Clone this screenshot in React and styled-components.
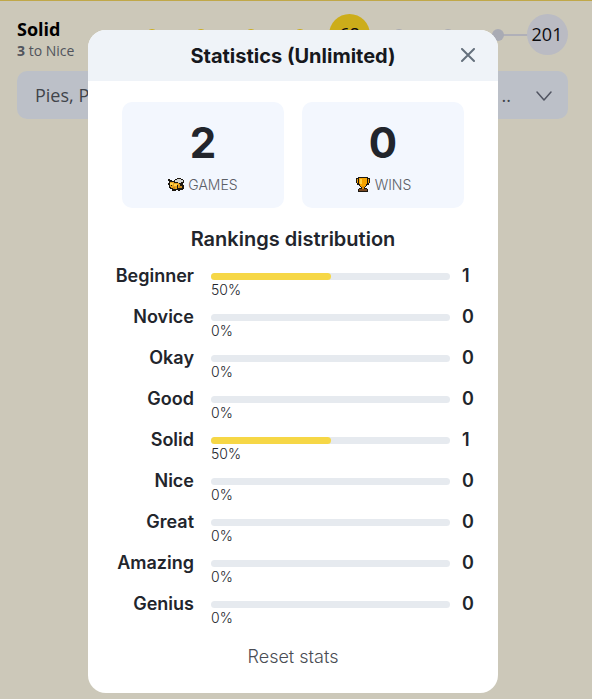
import React from 'react'
import styled, { createGlobalStyle } from 'styled-components'

const GlobalStyle = createGlobalStyle`
  * {
    box-sizing: border-box;
  }
  body {
    margin: 0;
    background-color: #fffbe8;
    color: #22252c;
    font-family: Inter, 'Liberation Sans', sans-serif;
  }
  h1, h2, p, ul, dl, dd {
    margin: 0;
    padding: 0;
  }
  button {
    border: none;
    padding: 0;
    background: none;
    font: inherit;
    cursor: pointer;
  }
`

const Game = styled.main`
  border-top: 1px solid #f0d35c;
  padding: 13px 24px 0 17px;
  font-family: 'Open Sans', sans-serif;
`

const RankRow = styled.div`
  display: flex;
  align-items: flex-start;
  justify-content: space-between;
  height: 41px;
`

const Rank = styled.div`
  padding-top: 3px;
`

const RankName = styled.p`
  color: #000;
  font-size: 18px;
  font-weight: 700;
  line-height: 24px;
`

const NextRank = styled.p`
  color: #666a74;
  font-size: 14px;
  line-height: 20px;
`

const Progress = styled.ul`
  display: flex;
  align-items: center;
  justify-content: space-between;
  width: 407px;
  height: 41px;
  margin-right: 15px;
  list-style: none;
  background: linear-gradient(#dcdde6, #dcdde6) center / 100% 2px no-repeat;
`

const Step = styled.li`
  display: flex;
  justify-content: center;
  width: 12px;
`

const Dot = styled.span`
  width: 12px;
  height: 12px;
  border-radius: 50%;
  background-color: ${props => (props.$reached ? '#ffd921' : '#d4d6e2')};
`

const Score = styled.span`
  flex: none;
  width: 41px;
  border-radius: 50%;
  background-color: ${props => (props.$reached ? '#ffd921' : '#e9eaf4')};
  color: #101014;
  font-size: 18px;
  line-height: 41px;
  text-align: center;
`

const WordList = styled.button`
  display: flex;
  align-items: center;
  width: 100%;
  height: 48px;
  margin-top: 16px;
  padding: 0 15px 0 18px;
  border-radius: 10px;
  background-color: #ecf1fa;
  color: #50555e;
  font-size: 18px;
`

const Words = styled.span`
  flex: 1;
  text-align: left;
`

const Chevron = styled.svg`
  width: 18px;
  height: 18px;
  margin-left: 24px;
`

const Overlay = styled.div`
  position: fixed;
  inset: 0;
  display: flex;
  align-items: flex-start;
  justify-content: center;
  padding: 30px 16px 0 10px;
  overflow: auto;
  background-color: rgba(0, 0, 0, 0.2);
`

const Modal = styled.section`
  width: 100%;
  max-width: 410px;
  border-radius: 18px;
  background-color: #fff;
  overflow: hidden;
`

const ModalHeader = styled.header`
  display: grid;
  grid-template-columns: 20px 1fr 20px;
  align-items: center;
  height: 51px;
  padding: 0 20px;
  background-color: #eff3f8;
`

const ModalTitle = styled.h1`
  grid-column: 2;
  color: #16181d;
  font-size: 20px;
  font-weight: 700;
  line-height: 24px;
  text-align: center;
`

const CloseButton = styled.button`
  display: flex;
  justify-content: center;
`

const ModalBody = styled.div`
  display: flex;
  flex-direction: column;
  padding: 21px 24px 24px;
`

const Cards = styled.dl`
  display: grid;
  grid-template-columns: 1fr 1fr;
  gap: 18px;
  padding: 0 10px;
`

const Card = styled.div`
  display: flex;
  flex-direction: column-reverse;
  align-items: center;
  justify-content: space-between;
  height: 106px;
  padding: 13px 0;
  border-radius: 10px;
  background-color: #f3f7fe;
`

const CardLabel = styled.dt`
  display: flex;
  align-items: center;
  gap: 4px;
  color: #5c6068;
  font-size: 14px;
  font-weight: 300;
  line-height: 20px;
  text-transform: uppercase;
`

const CardValue = styled.dd`
  font-size: 42px;
  font-weight: 700;
  line-height: 56px;
`

const Subtitle = styled.h2`
  margin: 19px 0 13px;
  font-size: 20px;
  font-weight: 600;
  line-height: 24px;
  text-align: center;
`

const Rankings = styled.ul`
  list-style: none;
`

const Ranking = styled.li`
  display: grid;
  grid-template-columns: 82px 1fr 12px;
  column-gap: 17px;
  height: 41px;
  font-size: 18px;
  font-weight: 600;
  line-height: 24px;
`

const RankingLabel = styled.span`
  text-align: right;
`

const Meter = styled.div`
  padding-top: 9px;
  margin-right: -5px;
`

const Track = styled.div`
  height: 7px;
  border-radius: 4px;
  background-color: #e6eaef;
`

const Fill = styled.div`
  height: 7px;
  border-radius: 4px;
  background-color: #f6d746;
`

const Percent = styled.p`
  font-size: 14px;
  font-weight: 300;
  line-height: 20px;
`

const ResetButton = styled.button`
  align-self: center;
  margin-top: 12px;
  color: #4a4d54;
  font-size: 18px;
  font-weight: 300;
  line-height: 24px;
`

const BeeIcon = () => (
  <svg width="16" height="16" viewBox="0 0 16 16" aria-hidden="true">
    <path d="M0 2h2v1h2v1h2V3h1V2h2V1h4v1h2v1h1v3h-1v2h1v4h-1v1h-3v1h-2v-1H8v1H4v-2H2v-1H1V8H0V6h1V4H0z" fill="#1c1710" />
    <path d="M2 5h4v1h5v1h1v4H9v1H7v-1H3v-1H2z" fill="#e9a21c" />
    <path d="M2 6h3v2H2zM6 7h3v2H6z" fill="#ffd04a" />
    <path d="M7 3h2V2h4v1h2v2h-2v1h-3V5H7z" fill="#d3d4d1" />
    <path d="M5 10h2v2H5zM11 9h3v2h-3z" fill="#c8861a" />
    <path d="M3 8h1v1H3zM9 8h1v3H9zM7 12h1v1H7z" fill="#1c1710" />
  </svg>
)

const TrophyIcon = () => (
  <svg width="16" height="16" viewBox="0 0 16 16" aria-hidden="true">
    <path d="M3 0h10v1h2v5h-1v2h-2v1h-1v1h-1v1h2v1h1v3H3v-3h1v-1h2v-1H5V9H4V8H2V6H1V1h2z" fill="#1c1710" />
    <path d="M4 1h8v6h-1v2h-1v1H6V9H5V7H4z" fill="#f5a300" />
    <path d="M5 2h2v5H5z" fill="#ffcf3f" />
    <path d="M2 2h1v4H2zM13 2h1v4h-1z" fill="#e89a08" />
    <path d="M7 9h2v3H7z" fill="#d98b06" />
    <path d="M4 12h8v2H4z" fill="#7a4a22" />
  </svg>
)

const CloseIcon = () => (
  <svg width="16" height="16" viewBox="0 0 16 16" aria-hidden="true">
    <path d="M2 1l12 12M14 1L2 13" stroke="#65707d" strokeWidth="2" strokeLinecap="round" />
  </svg>
)

const stats = [
  { label: 'Games', value: 2, Icon: BeeIcon },
  { label: 'Wins', value: 0, Icon: TrophyIcon },
]

const rankings = [
  { name: 'Beginner', count: 1 },
  { name: 'Novice', count: 0 },
  { name: 'Okay', count: 0 },
  { name: 'Good', count: 0 },
  { name: 'Solid', count: 1 },
  { name: 'Nice', count: 0 },
  { name: 'Great', count: 0 },
  { name: 'Amazing', count: 0 },
  { name: 'Genius', count: 0 },
]

const total = rankings.reduce((sum, { count }) => sum + count, 0)
const currentRank = 4
const scores = { 4: 68, 8: 201 }

const App = () => (
  <>
    <GlobalStyle />
    <Game>
      <RankRow>
        <Rank>
          <RankName>Solid</RankName>
          <NextRank>
            <b>3</b> to Nice
          </NextRank>
        </Rank>
        <Progress>
          {rankings.map(({ name }, i) => (
            <Step key={name}>
              {scores[i] ? (
                <Score $reached={i <= currentRank}>{scores[i]}</Score>
              ) : (
                <Dot $reached={i <= currentRank} />
              )}
            </Step>
          ))}
        </Progress>
      </RankRow>
      <WordList>
        <Words>Pies, P</Words>
        <span>..</span>
        <Chevron viewBox="0 0 18 18" aria-hidden="true">
          <path d="M2 6l7 8 7-8" fill="none" stroke="#65697a" strokeWidth="1.5" strokeLinecap="round" strokeLinejoin="round" />
        </Chevron>
      </WordList>
    </Game>
    <Overlay>
      <Modal role="dialog" aria-labelledby="stats-title">
        <ModalHeader>
          <ModalTitle id="stats-title">Statistics (Unlimited)</ModalTitle>
          <CloseButton aria-label="Close">
            <CloseIcon />
          </CloseButton>
        </ModalHeader>
        <ModalBody>
          <Cards>
            {stats.map(({ label, value, Icon }) => (
              <Card key={label}>
                <CardLabel>
                  <Icon />
                  {label}
                </CardLabel>
                <CardValue>{value}</CardValue>
              </Card>
            ))}
          </Cards>
          <Subtitle>Rankings distribution</Subtitle>
          <Rankings>
            {rankings.map(({ name, count }) => {
              const percent = Math.round((count / total) * 100)
              return (
                <Ranking key={name}>
                  <RankingLabel>{name}</RankingLabel>
                  <Meter>
                    <Track>
                      <Fill style={{ width: `${percent}%` }} />
                    </Track>
                    <Percent>{percent}%</Percent>
                  </Meter>
                  <span>{count}</span>
                </Ranking>
              )
            })}
          </Rankings>
          <ResetButton>Reset stats</ResetButton>
        </ModalBody>
      </Modal>
    </Overlay>
  </>
)

export default App
